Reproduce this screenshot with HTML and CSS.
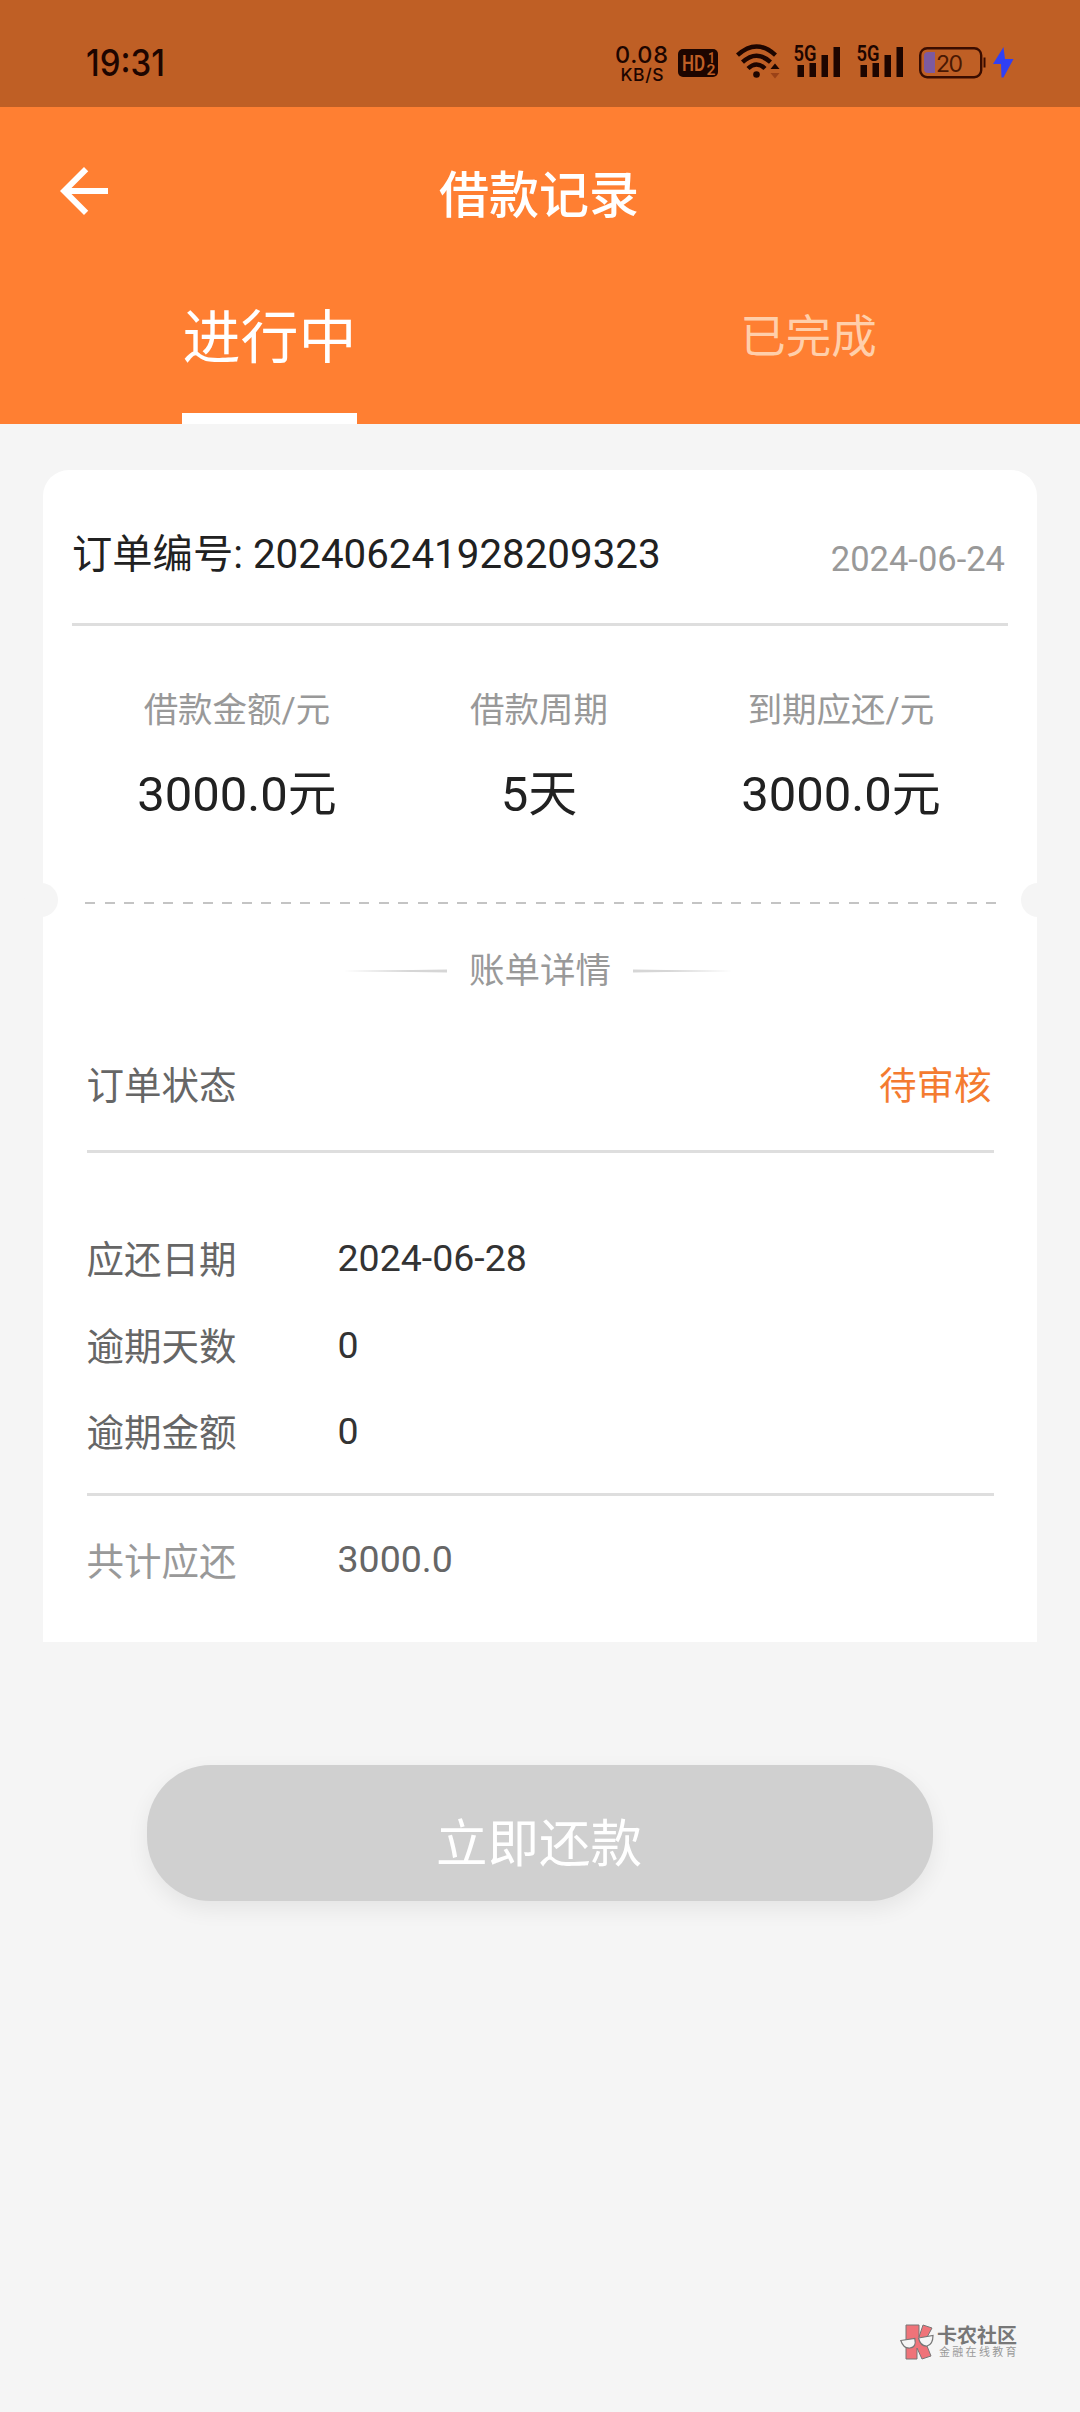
FILE: index.html
```
<!DOCTYPE html>
<html lang="zh-CN">
<head>
<meta charset="utf-8">
<title>借款记录</title>
<link rel="stylesheet" href="styles.css">
</head>
<body>
<div class="screen">
  <div class="statusbar">
    <svg class="clock" width="80" height="50" viewBox="86 40 80 50"><text x="86" y="75.500" font-size="36.500" font-weight="500" textLength="79" lengthAdjust="spacingAndGlyphs">19:31</text></svg>
    <svg class="speed" width="52" height="50" viewBox="616 40 52 50"><text x="615" y="63" font-size="23.500" textLength="53">0.08</text><text x="620.500" y="80.500" font-size="17.500" textLength="43">KB/S</text></svg>
    <svg class="hd" width="40" height="50" viewBox="678 40 40 50"><rect x="678" y="49" width="40" height="28" rx="5"/><g fill="#bf5f25" font-weight="600"><text x="682" y="71" font-size="22" textLength="23" lengthAdjust="spacingAndGlyphs">HD</text><text x="708" y="62.500" font-size="14" textLength="7" lengthAdjust="spacingAndGlyphs">1</text><text x="706.500" y="74.500" font-size="14" textLength="9" lengthAdjust="spacingAndGlyphs">2</text></g></svg>
    <svg class="wifi" width="44" height="50" viewBox="736 40 44 50"><g fill="none" stroke="#1d0500" stroke-width="4.400"><path d="M737.500 55.200Q756.500 37.800 775.500 55.200M742.500 62.200Q756.500 49.200 770.500 62.200M748 68.500Q756.500 60.500 765 68.500"/></g><circle cx="756.500" cy="74.500" r="3.300"/><path d="M770.500 69l4.500-5.500 4.500 5.500z"/><path d="M770.500 73h9l-4.500 5.500z" fill="#9b4217"/></svg>
    <svg class="signal" width="47" height="50" viewBox="793 40 47 50"><text x="793.500" y="61" font-size="22" font-weight="600" textLength="23" lengthAdjust="spacingAndGlyphs">5G</text><path d="M797.500 65h6.500v12h-6.500zM809.500 63h6.500v14h-6.500zM821.500 55h6.500v22h-6.500zM833.500 47h6.500v30h-6.500z"/></svg>
    <svg class="signal second" width="47" height="50" viewBox="793 40 47 50"><text x="793.500" y="61" font-size="22" font-weight="600" textLength="23" lengthAdjust="spacingAndGlyphs">5G</text><path d="M797.500 65h6.500v12h-6.500zM809.500 63h6.500v14h-6.500zM821.500 55h6.500v22h-6.500zM833.500 47h6.500v30h-6.500z"/></svg>
    <svg class="battery" width="67" height="50" viewBox="919 40 67 50"><rect x="920.200" y="48.200" width="61" height="29" rx="7" fill="none" stroke="#3a0d00" stroke-width="2.400"/><path d="M928 52h7v21h-7q-4 0-4-4v-13q0-4 4-4z" fill="#7d5aa0"/><path d="M983.500 57.500h2v10h-2z" fill="#3a0d00"/><text x="936" y="71.500" font-size="23" fill="#4a1803" textLength="27">20</text></svg>
    <svg class="bolt" width="21" height="50" viewBox="993 40 21 50"><path d="M1003.500 47l-10.500 17h8l.5 13.500h2l10-18.500h-8.500z" fill="#3040f4"/></svg>
  </div>

  <header class="header">
    <div class="titlebar">
      <svg class="back" width="72" height="72" viewBox="0 0 24 24"><path fill="#fff" d="M20 11H7.830l5.590-5.590L12 4l-8 8 8 8 1.410-1.410L7.830 13H20z"/></svg>
      <h1 class="title">借款记录</h1>
    </div>
    <nav class="tabs">
      <div class="tab"><span class="tab-label active">进行中</span></div>
      <div class="tab"><span class="tab-label">已完成</span></div>
    </nav>
  </header>

  <main class="card">
    <div class="order">
      <span class="order-no">订单编号: 202406241928209323</span>
      <span class="order-date">2024-06-24</span>
    </div>
    <div class="stats">
      <div class="stat"><span class="stat-label">借款金额/元</span><span class="stat-value">3000.0元</span></div>
      <div class="stat"><span class="stat-label">借款周期</span><span class="stat-value">5天</span></div>
      <div class="stat"><span class="stat-label">到期应还/元</span><span class="stat-value">3000.0元</span></div>
    </div>
    <div class="perforation"></div>
    <div class="section-title">
      <svg width="112" height="4" viewBox="0 0 112 4"><path d="M8 2L112 .4v3.200z" fill="#d6d6d6"/></svg>
      <span>账单详情</span>
      <svg width="112" height="4" viewBox="0 0 112 4"><path d="M100 2L0 .4v3.200z" fill="#d6d6d6"/></svg>
    </div>
    <div class="state"><span>订单状态</span><span class="pending">待审核</span></div>
    <div class="details">
      <div class="row"><span class="label">应还日期</span><span class="value">2024-06-28</span></div>
      <div class="row"><span class="label">逾期天数</span><span class="value">0</span></div>
      <div class="row"><span class="label">逾期金额</span><span class="value">0</span></div>
    </div>
    <div class="total"><span class="label">共计应还</span><span class="value">3000.0</span></div>
  </main>

  <button class="pay">立即还款</button>

  <footer class="brand">
    <svg width="34" height="36" viewBox="0 0 34 36">
      <path d="M6 1h13v12l4-12 9 3-7 13 6 15-9 3-5-11v11H6z" fill="#ef7379" stroke="#777" stroke-width="1"/>
      <path d="M.8 16.500l14-2q2 9-5 9.500-6.500.5-9-7.500zM18.500 14l14.500-2.500q0 9-6 10.500-6.500.5-8.500-8z" fill="#f5f5f5" stroke="#777" stroke-width="1.200"/>
    </svg>
    <div class="brand-text"><span class="brand-name">卡农社区</span><span class="brand-sub">金融在线教育</span></div>
  </footer>
</div>
</body>
</html>
```
FILE: styles.css
```
* { box-sizing: border-box; }

body {
  margin: 0;
  background: #f5f5f5;
  font-family: Roboto, "Noto Sans CJK SC", sans-serif;
  color: #212121;
}

.screen {
  width: 1080px;
  height: 2412px;
  display: flex;
  flex-direction: column;
}

.statusbar {
  height: 107px;
  flex: none;
  padding: 40px 66px 0 86px;
  display: flex;
  background: #bf5f25;
  fill: #1d0500;
  font-family: Inter, sans-serif;
}
.statusbar svg { flex: none; }
.clock { margin-right: auto; }
.speed { margin-right: 10px; font-weight: 500; }
.hd { margin-right: 18px; font-family: Roboto, sans-serif; }
.wifi { margin-right: 13px; }
.signal { margin-right: 16px; font-family: Roboto, sans-serif; }
.battery { margin-right: 7px; }

.header {
  height: 317px;
  flex: none;
  background: #ff7f32;
  color: #fff;
  display: flex;
  flex-direction: column;
}
.titlebar {
  height: 168px;
  display: grid;
  grid-template-columns: 120px 1fr 122px;
  align-items: center;
}
.back { justify-self: end; }
.title {
  margin: 9px 0 0;
  font-size: 50px;
  font-weight: 500;
  line-height: 60px;
  text-align: center;
}
.tabs { flex: 1; display: flex; }
.tab { flex: 1; display: flex; justify-content: center; }
.tab:last-child { padding-right: 2px; }
.tab-label {
  padding-top: 3px;
  height: 149px;
  line-height: 120px;
  font-size: 45.500px;
  color: #ffcfab;
}
.tab-label.active {
  font-size: 58px;
  color: #fff;
  border-bottom: 11px solid #fff;
}

.card {
  position: relative;
  flex: none;
  width: 994px;
  height: 1172px;
  margin: 46px 0 0 43px;
  background: #fff;
  border-radius: 26px 26px 0 0;
}
/* ticket notches cut into both edges */
.card::before,
.card::after {
  content: "";
  position: absolute;
  top: 413px;
  width: 34px;
  height: 34px;
  border-radius: 50%;
  background: #f5f5f5;
}
.card::before { left: -19px; }
.card::after { right: -18px; }

.order {
  height: 156px;
  margin: 0 29px;
  padding-top: 16px;
  border-bottom: 3px solid #dedede;
  display: flex;
  align-items: center;
  justify-content: space-between;
}
.order-no { font-size: 40.300px; line-height: 60px; }
.order-date { font-size: 34.500px; line-height: 48px; padding: 8px 3px 0 0; color: #999; }

.stats {
  display: flex;
  padding: 60px 45px 77px 43px;
}
.stat {
  flex: 1;
  display: flex;
  flex-direction: column;
  align-items: center;
  gap: 31px;
}
.stat-label { font-size: 34.500px; line-height: 48px; color: #999; }
.stat-value { font-size: 49px; line-height: 60px; }

.perforation {
  height: 2px;
  margin: 0 40px 0 42px;
  background: repeating-linear-gradient(to right, #c4c4c4 0 10px, transparent 10px 19.590px);
}

.section-title {
  margin-top: 43px;
  height: 48px;
  display: flex;
  align-items: center;
  justify-content: center;
  gap: 22px;
  font-size: 35.500px;
  line-height: 48px;
  color: #999;
}

.state {
  height: 158px;
  margin: 0 43.500px;
  padding-top: 27px;
  border-bottom: 3px solid #dedede;
  display: flex;
  align-items: center;
  justify-content: space-between;
  font-size: 37.500px;
  line-height: 48px;
  color: #666;
}
.pending { color: #f47b30; margin-right: 2px; }

.details {
  margin: 0 43.500px;
  padding: 64px 0 16.500px;
  border-bottom: 3px solid #dedede;
}
.row {
  height: 86.500px;
  display: flex;
  align-items: center;
}
.label, .value { font-size: 37.500px; line-height: 48px; }
.label { width: 251px; color: #666; }
.value { margin-bottom: 4px; color: #333; }

.total {
  margin: 0 43.500px;
  padding-top: 42px;
  display: flex;
}
.total .label { color: #999; }
.total .value { margin-top: -3px; color: #666; }

.pay {
  flex: none;
  align-self: center;
  width: 786px;
  height: 136px;
  margin-top: 123px;
  padding: 24px 2px 0 0;
  border: 0;
  border-radius: 64px;
  background: #d0d0d0;
  color: #fff;
  font: 51.500px/60px Roboto, "Noto Sans CJK SC", sans-serif;
  box-shadow: 0 8px 22px rgba(0, 0, 0, .07);
}

.brand {
  margin: auto 63px 52px auto;
  display: flex;
  align-items: center;
  gap: 3px;
}
.brand-text { display: flex; flex-direction: column; }
.brand-name { font-size: 20px; line-height: 20px; font-weight: 700; color: #777; }
.brand-sub { padding-left: 2px; font-size: 11px; line-height: 13px; letter-spacing: 2.300px; margin-right: -4px; color: #999; }
```
